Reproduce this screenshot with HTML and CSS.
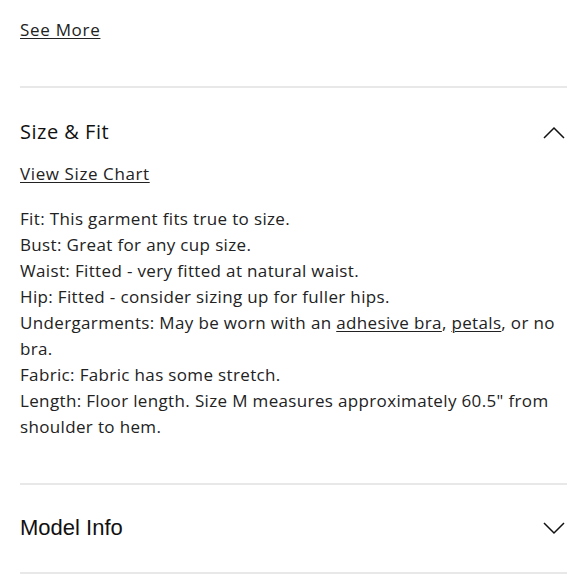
FILE: index.html
```html
<!DOCTYPE html>
<html>
<head>
<meta charset="utf-8">
<link rel="stylesheet" href="styles.css">
</head>
<body>
<div class="page">
  <div class="see-more-row"><a class="link" href="#">See More</a></div>
  <section class="acc acc-open">
    <div class="acc-head">
      <h2 class="acc-title">Size &amp; Fit</h2>
      <svg class="chev" width="22" height="13" viewBox="0 0 22 13"><path d="M1 12 L11 2 L21 12" fill="none" stroke="#111" stroke-width="1.5"/></svg>
    </div>
    <a class="link chart-link" href="#">View Size Chart</a>
    <p class="fit-text">Fit: This garment fits true to size.<br>Bust: Great for any cup size.<br>Waist: Fitted - very fitted at natural waist.<br>Hip: Fitted - consider sizing up for fuller hips.<br>Undergarments: May be worn with an <a class="link" href="#">adhesive bra</a>, <a class="link" href="#">petals</a>, or no bra.<br>Fabric: Fabric has some stretch.<br>Length: Floor length. Size M measures approximately 60.5" from shoulder to hem.</p>
  </section>
  <section class="acc">
    <div class="acc-head closed">
      <h2 class="acc-title model">Model Info</h2>
      <svg class="chev" width="22" height="13" viewBox="0 0 22 13"><path d="M1 1 L11 11 L21 1" fill="none" stroke="#111" stroke-width="1.5"/></svg>
    </div>
  </section>
</div>
</body>
</html>
```
FILE: styles.css
```css
html, body { margin: 0; padding: 0; background: #fff; }
body { font-family: "Open Sans", "Noto Sans", sans-serif; color: #222; }
.page { padding: 0 13px 0 20px; }
.link { color: #222; text-decoration: underline; text-underline-offset: 2px; text-decoration-thickness: 1px; }
.see-more-row { padding-top: 17px; padding-bottom: 43px; font-size: 17px; letter-spacing: 0.7px; line-height: 26px; border-bottom: 2px solid #e8e8e8; }
.acc { border-bottom: 2px solid #e8e8e8; }
.acc-head { display: flex; justify-content: space-between; align-items: center; padding-top: 31px; }
.acc-title { margin: 0; font-size: 20px; letter-spacing: 0.5px; line-height: 26px; font-weight: 400; color: #111; }
.chev { margin-right: 2px; }
.chart-link { display: block; margin-top: 16px; font-size: 17px; letter-spacing: 0.6px; line-height: 26px; width: max-content; }
.fit-text { margin: 19px 0 0; padding-bottom: 43px; font-size: 17px; letter-spacing: 0.35px; line-height: 26px; }
.acc-head.closed { padding-top: 30px; padding-bottom: 31px; }
.model { font-family: "Liberation Sans", Arial, sans-serif; font-size: 22px; letter-spacing: 0; }
```
